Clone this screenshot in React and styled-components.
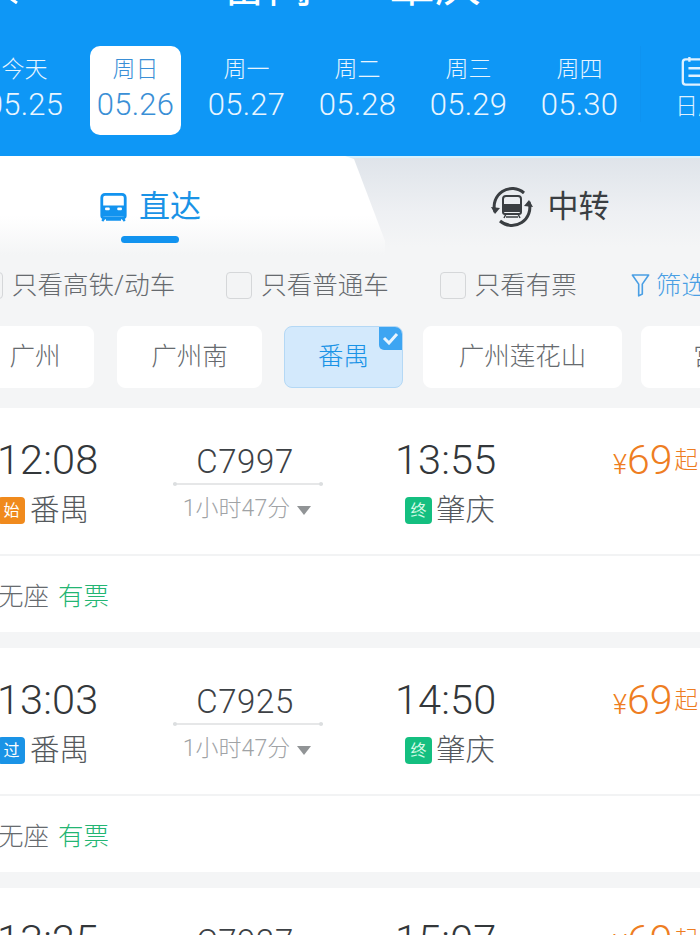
import React from 'react';
import styled, { createGlobalStyle } from 'styled-components';

const Global = createGlobalStyle`
  html, body { margin: 0; padding: 0; height: 935px; overflow: hidden; background: #f4f5f6; }
  body { font-family: Roboto, "Noto Sans CJK SC", "Noto Sans", sans-serif; }
`;

const Page = styled.div`
  width: 700px; height: 935px; overflow: hidden; background: #f4f5f6;
  display: flex; flex-direction: column;
  & > * { flex-shrink: 0; }
`;
const Header = styled.header`
  flex: 0 0 157px; background: #0e97f6; color: #fff; display: flex; flex-direction: column; overflow: hidden;
`;
const TitleBar = styled.div`
  height: 46px; position: relative; display: flex; justify-content: center; align-items: flex-start; gap: 76px;
  font-size: 46px; line-height: 50px; padding-left: 2px; box-sizing: border-box;
`;
const BackIcon = styled.svg`
  position: absolute; left: 3px; top: -14px;
`;
const TitleText = styled.span`
  display: block; height: 50px; margin-top: -40px; font-weight: 400;
`;
const DateStrip = styled.div`
  display: flex; margin-left: -31px; height: 90px; align-items: stretch;
`;
const DateItem = styled.div`
  flex: 0 0 111px; display: flex; flex-direction: column; align-items: center;
`;
const DateBox = styled.div`
  width: 91px; height: 89px; border-radius: 10px; display: flex; flex-direction: column; align-items: center;
  background: ${p => (p.$active ? '#fff' : 'transparent')};
  color: ${p => (p.$active ? '#3a8fd6' : '#e8f5ff')};
`;
const DateWeek = styled.div`
  font-size: 23px; line-height: 30px; margin-top: 9px; font-weight: 300;
`;
const DateDay = styled.div`
  font-size: 31px; line-height: 36px; margin-top: 2px; font-weight: 300; letter-spacing: 0.3px; white-space: nowrap;
`;
const CalendarCell = styled.div`
  flex: 1; display: flex; flex-direction: column; align-items: flex-start; box-sizing: border-box;
  padding: 11px 0 0 34px; margin-left: 5px; color: #dff1ff; border-left: 1px solid #0e93f1; height: 76px;
  font-size: 23px; line-height: 30px; white-space: nowrap; font-weight: 300;
`;
const CalendarText = styled.span`
  margin-top: 5px;
`;
const Tabs = styled.div`
  flex: 0 0 101px; display: flex; background: linear-gradient(#dfe4ea 0%, #eef0f3 55%, #f4f5f6 90%);
  border-top: 2px solid #d8f1fd; box-sizing: border-box; margin-top: -1px;
`;
const LeftTab = styled.div`
  flex: 0 0 385px; height: 99px; margin-top: -2px; display: flex; flex-direction: column; align-items: center;
  background: linear-gradient(#fff 0%, #fff 60%, #f4f5f6 100%);
  clip-path: polygon(0 0, 345px 0, 354px 3px, 385px 85px, 385px 100%, 0 100%);
  padding-right: 85px; box-sizing: border-box;
`;
const TabLabel = styled.div`
  display: flex; align-items: center; gap: ${p => p.$gap}px; font-size: 31px; line-height: 40px; margin-top: ${p => p.$top}px;
  color: ${p => p.$color}; margin-left: ${p => p.$offset || 0}px;
`;
const TabBar = styled.div`
  width: 58px; height: 7px; border-radius: 4px; background: #1293ef; margin-top: 9px;
`;
const RightTab = styled.div`
  flex: 1; display: flex; flex-direction: column; align-items: center;
`;
const Filters = styled.div`
  display: flex; align-items: center; height: 56px; margin-left: -23px; font-size: 25.5px; color: #666a6e; white-space: nowrap; font-weight: 300;
`;
const FilterItem = styled.div`
  display: flex; align-items: center; gap: 9px; margin-right: ${p => p.$mr}px;
`;
const FilterLabel = styled.span`
  display: block; padding-bottom: 6px;
`;
const Check = styled.span`
  display: block; width: 26px; height: 27px; border: 1.5px solid #d5d7d9; border-radius: 4px; background: #f3f4f5; box-sizing: border-box;
`;
const FilterLink = styled.div`
  display: flex; align-items: center; gap: 6px; color: #4a9fe4;
`;
const Chips = styled.div`
  display: flex; margin-left: -24px; margin-top: 13px; height: 63px;
`;
const Chip = styled.div`
  flex: 0 0 ${p => p.$w}px; height: 62px; margin-left: ${p => p.$ml}px; box-sizing: border-box; border-radius: 8px; position: relative; overflow: hidden;
  display: flex; align-items: center; justify-content: center; font-size: 25.5px; font-weight: 300; padding-bottom: 7px;
  background: ${p => (p.$active ? '#d3e9fc' : '#fff')};
  border: 1px solid ${p => (p.$active ? '#b4d8f5' : '#fff')};
  color: ${p => (p.$active ? '#1a93e6' : '#666a6e')};
`;
const ChipMark = styled.span`
  position: absolute; right: 0; top: 0; width: 23px; height: 23px; background: #3da5f2; border-radius: 0 0 0 5px;
  display: flex; align-items: center; justify-content: center;
`;
const List = styled.div`
  margin-top: 19px; display: flex; flex-direction: column; gap: 16px;
`;
const Card = styled.article`
  background: #fff; flex: 0 0 224px; height: 224px; box-sizing: border-box;
`;
const CardMain = styled.div`
  height: 148px; box-sizing: border-box; border-bottom: 2px solid #f2f3f4; display: grid;
  grid-template-columns: 175px 150px 1fr auto; padding-top: 28px; margin-left: -2px;
`;
const Stop = styled.div`
  display: flex; flex-direction: column; align-items: flex-start; padding-left: ${p => p.$left || 0}px;
`;
const Time = styled.div`
  font-size: 41.5px; line-height: 48px; margin-left: -1px; color: #33373a; font-weight: 300; letter-spacing: 0.1px;
`;
const StationRow = styled.div`
  display: flex; align-items: center; gap: ${p => p.$gap}px; font-size: 29.5px; line-height: 40px; color: #55595d; margin-top: 6px;
  margin-left: ${p => p.$indent || 0}px; font-weight: 300;
`;
const Badge = styled.span`
  width: 27px; height: 27px; border-radius: 4px; background: ${p => p.$bg}; color: ${p => p.$fg || '#fff'};
  font-size: 16px; line-height: 27px; text-align: center; display: block; flex: none; font-weight: 400;
`;
const Middle = styled.div`
  display: flex; flex-direction: column; align-items: center;
`;
const TrainNo = styled.div`
  font-size: 33px; line-height: 42px; color: #3d4145; font-weight: 300; letter-spacing: 0.6px; margin: 5px 6px 0 0;
`;
const Line = styled.div`
  width: 150px; height: 2px; background: #e6e7e8; flex: none; position: relative;
  &::before, &::after { content: ''; position: absolute; top: -1px; width: 4px; height: 4px; border-radius: 50%; background: #dcdee0; }
  &::before { left: 0; } &::after { right: 0; }
`;
const Duration = styled.div`
  display: flex; align-items: center; gap: 7px; font-size: 23px; line-height: 32px; color: #a0a3a6; margin: 8px 2px 0 0; font-weight: 300; white-space: nowrap;
`;
const Caret = styled.span`
  display: block; width: 0; height: 0; border-left: 7.5px solid transparent; border-right: 7.5px solid transparent; border-top: 9px solid #919496; margin-top: 2px;
`;
const Price = styled.div`
  display: flex; align-items: baseline; color: #ee7d22; line-height: 48px; height: 48px; padding-right: 2px;
`;
const PriceSign = styled.span`
  font-size: 27px; font-weight: 300;
`;
const PriceNum = styled.span`
  font-size: 41px; margin: 0 2px 0 0; font-weight: 300;
`;
const PriceUnit = styled.span`
  font-size: 23.5px; font-weight: 300; align-self: flex-start;
`;
const CardFoot = styled.div`
  display: flex; gap: 9px; margin-left: -2px; padding-top: 23px; font-size: 25.5px; line-height: 34px; color: #666a6e; font-weight: 300;
`;
const Avail = styled.span`
  color: #23b573;
`;

const TrainIcon = ({ color = '#1293ef' }) => (
  <svg width="29" height="30" viewBox="0 0 30 32" fill="none">
    <path d="M6 2.500h18c2 0 3.500 1.500 3.500 3.500v19c0 1.500-1 2.500-2.500 2.500H5C3.500 27.500 2.500 26.500 2.500 25V6C2.500 4 4 2.500 6 2.500Z" stroke={color} strokeWidth="3" />
    <path d="M3 14.500h24V24c0 1.500-1 2-2 2H5c-1 0-2-.5-2-2v-9.500Z" fill={color} />
    <rect x="6" y="16.500" width="5" height="3" rx="1" fill="#fff" />
    <rect x="19" y="16.500" width="5" height="3" rx="1" fill="#fff" />
    <path d="M6 27l-3 4M24 27l3 4M7 29.500h16" stroke={color} strokeWidth="2.500" />
  </svg>
);

const TransferIcon = () => (
  <svg width="42" height="42" viewBox="0 0 42 42" fill="none">
    <path d="M4 26A18 18 0 0 1 33 7" stroke="#3a3e42" strokeWidth="3" />
    <path d="M38 16A18 18 0 0 1 9 35" stroke="#3a3e42" strokeWidth="3" />
    <path d="M0 21l4 7 5-6ZM42 21l-4-7-5 6Z" fill="#3a3e42" />
    <path d="M15 10h12c2 0 3 1 3 3v13c0 1-1 2-2 2H14c-1 0-2-1-2-2V13c0-2 1-3 3-3Z" stroke="#3a3e42" strokeWidth="2" />
    <path d="M13 18h16v8H13Z" fill="#3a3e42" />
    <path d="M15 28l-2 4M27 28l2 4M15 31h12" stroke="#3a3e42" strokeWidth="1.500" />
  </svg>
);

const CalendarIcon = () => (
  <svg width="40" height="32" viewBox="0 0 40 32" fill="none">
    <path d="M10 2.500h22c2 0 3 1 3 3v21c0 2-1 3-3 3H10c-2 0-3-1-3-3v-21c0-2 1-3 3-3Z" stroke="#dff1ff" strokeWidth="2.500" />
    <path d="M14 0v5M28 0v5M13 12h18M13 20h18" stroke="#dff1ff" strokeWidth="2.500" />
  </svg>
);

const FunnelIcon = () => (
  <svg width="19" height="26" viewBox="0 0 21 26" fill="none">
    <path d="M1.500 2h18L12.500 12v11L8.500 25V12Z" stroke="#4a9fe4" strokeWidth="1.800" strokeLinejoin="round" />
  </svg>
);

const dates = [
  ['今天', '05.25'], ['周日', '05.26', true], ['周一', '05.27'], ['周二', '05.28'], ['周三', '05.29'], ['周四', '05.30'],
];

const chips = [
  { t: '广州', w: 118, ml: 0 }, { t: '广州南', w: 145, ml: 23 }, { t: '番禺', w: 119, ml: 22, active: true }, { t: '广州莲花山', w: 199, ml: 20 }, { t: '宫', w: 130, ml: 19 },
];

const trains = [
  { dep: '12:08', tag: '始', tagBg: '#f08a1d', no: 'C7997', arr: '13:55' },
  { dep: '13:03', tag: '过', tagBg: '#1a93e6', no: 'C7925', arr: '14:50' },
  { dep: '13:25', tag: '过', tagBg: '#1a93e6', no: 'C7927', arr: '15:07' },
];

export default function App() {
  return (
    <Page>
      <Global />
      <Header>
        <TitleBar>
          <BackIcon width="16" height="18" viewBox="0 0 16 18" fill="none">
            <path d="M14 2L4 10l10 7" stroke="#fff" strokeWidth="3" />
          </BackIcon>
          <TitleText>番禺</TitleText>
          <TitleText>肇庆</TitleText>
        </TitleBar>
        <DateStrip>
          {dates.map(([w, d, active]) => (
            <DateItem key={d}>
              <DateBox $active={active}>
                <DateWeek>{w}</DateWeek>
                <DateDay>{d}</DateDay>
              </DateBox>
            </DateItem>
          ))}
          <CalendarCell>
            <CalendarIcon />
            <CalendarText>日历</CalendarText>
          </CalendarCell>
        </DateStrip>
      </Header>
      <Tabs>
        <LeftTab>
          <TabLabel $color="#1a93e6" $gap={11} $top={31}>
            <TrainIcon />
            直达
          </TabLabel>
          <TabBar />
        </LeftTab>
        <RightTab>
          <TabLabel $color="#3a3e42" $gap={15} $offset={15} $top={28}>
            <TransferIcon />
            中转
          </TabLabel>
        </RightTab>
      </Tabs>
      <Filters>
        <FilterItem $mr={51}><Check /><FilterLabel>只看高铁/动车</FilterLabel></FilterItem>
        <FilterItem $mr={51}><Check /><FilterLabel>只看普通车</FilterLabel></FilterItem>
        <FilterItem $mr={54}><Check /><FilterLabel>只看有票</FilterLabel></FilterItem>
        <FilterLink><FunnelIcon /><FilterLabel>筛选</FilterLabel></FilterLink>
      </Filters>
      <Chips>
        {chips.map(c => (
          <Chip key={c.t} $w={c.w} $ml={c.ml} $active={c.active}>
            {c.t}
            {c.active && (
              <ChipMark>
                <svg width="17" height="13" viewBox="0 0 17 13" fill="none"><path d="M2 6l5 5 8-9" stroke="#e8f5ff" strokeWidth="3" /></svg>
              </ChipMark>
            )}
          </Chip>
        ))}
      </Chips>
      <List>
        {trains.map(t => (
          <Card key={t.no}>
            <CardMain>
              <Stop>
                <Time>{t.dep}</Time>
                <StationRow $gap={5}><Badge $bg={t.tagBg}>{t.tag}</Badge>番禺</StationRow>
              </Stop>
              <Middle>
                <TrainNo>{t.no}</TrainNo>
                <Line />
                <Duration>1小时47分<Caret /></Duration>
              </Middle>
              <Stop $left={73}>
                <Time>{t.arr}</Time>
                <StationRow $indent={9} $gap={4}><Badge $bg="#14bf80" $fg="#d8fbe8">终</Badge>肇庆</StationRow>
              </Stop>
              <Price>
                <PriceSign>¥</PriceSign><PriceNum>69</PriceNum><PriceUnit>起</PriceUnit>
              </Price>
            </CardMain>
            <CardFoot>无座<Avail>有票</Avail></CardFoot>
          </Card>
        ))}
      </List>
    </Page>
  );
}
